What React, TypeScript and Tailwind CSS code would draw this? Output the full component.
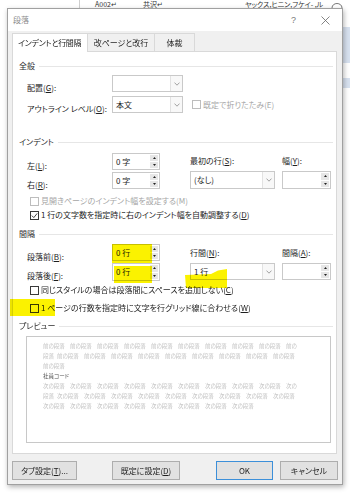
import React from "react";

const U = ({ c }: { c: string }) => (
  <span className="underline underline-offset-[1px]">{c}</span>
);

const Chevron = () => (
  <svg width="6" height="4" viewBox="0 0 6 4">
    <path d="M0.5 0.6 L3 3.2 L5.5 0.6" fill="none" stroke="#8a8a8a" strokeWidth="0.8" />
  </svg>
);

const Select = ({ className, value }: { className: string; value: string }) => (
  <div className={`${className} border border-[#c9c9c9] bg-white flex items-stretch`}>
    <div className="flex-1 flex items-center pl-[3px] text-[8px] leading-none text-[#1e1e1e]">{value}</div>
    <div className="w-[12px] border-l border-[#e2e2e2] bg-[#f8f8f8] flex items-center justify-center">
      <Chevron />
    </div>
  </div>
);

const Spin = ({ className, value }: { className: string; value: string }) => (
  <div className={`${className} border border-[#c9c9c9] bg-white flex items-stretch`}>
    <div className="flex-1 flex items-center pl-[3px] text-[8px] leading-none text-[#1e1e1e]">{value}</div>
    <div className="w-[8px] my-[1px] mr-[1px] flex flex-col gap-[1px]">
      <div className="flex-1 bg-[#e6e6e6] flex items-center justify-center">
        <svg width="3" height="2" viewBox="0 0 3 2"><path d="M0 2 L1.5 0 L3 2Z" fill="#222" /></svg>
      </div>
      <div className="flex-1 bg-[#e6e6e6] flex items-center justify-center">
        <svg width="3" height="2" viewBox="0 0 3 2"><path d="M0 0 L1.5 2 L3 0Z" fill="#222" /></svg>
      </div>
    </div>
  </div>
);

const Box = ({ disabled, checked }: { disabled?: boolean; checked?: boolean }) => (
  <div
    className={
      disabled
        ? "w-[9px] h-[9px] shrink-0 border border-[#bdbdbd] bg-white"
        : "w-[9px] h-[9px] shrink-0 border border-[#3a3a3a] bg-white flex items-center justify-center"
    }
  >
    {checked && (
      <svg width="7" height="7" viewBox="0 0 7 7">
        <path d="M0.8 3.6 L2.8 5.6 L6.2 1.4" fill="none" stroke="#333" strokeWidth="0.9" />
      </svg>
    )}
  </div>
);

const Header = ({ title, className }: { title: string; className: string }) => (
  <div className={`${className} h-[10px] flex items-center pl-[6px] pr-[3px]`}>
    <span className="text-[8px] leading-none text-[#2a2a2a] whitespace-nowrap">{title}</span>
    <div className="flex-1 h-px bg-[#e6e6e6] ml-[4px]" />
  </div>
);

const Lbl = ({ children }: { children: React.ReactNode }) => (
  <span className="text-[8px] leading-none text-[#1e1e1e] whitespace-nowrap">{children}</span>
);

const Groups = ({ word, n }: { word: string; n: number }) => (
  <>
    {Array.from({ length: n }).map((_, i) => (
      <span key={i} className="w-[27px] shrink-0 whitespace-nowrap">
        {word}
      </span>
    ))}
  </>
);

export default function App() {
  return (
    <div className="relative w-[350px] h-[496px] overflow-hidden bg-white text-[#333] font-['Noto_Sans_CJK_JP','Noto_Sans',sans-serif] [font-feature-settings:'palt']">
      {/* desktop behind */}
      <div className="h-[8px] flex items-end overflow-hidden text-[7px] leading-[8px] text-[#333]">
        <div className="w-[80px] h-full shrink-0 border-r border-[#cfcfcf]" />
        <span className="ml-[15px] whitespace-nowrap">A002↵</span>
        <span className="ml-[26px] whitespace-nowrap">共沢↵</span>
        <span className="ml-[82px] whitespace-nowrap">ヤックス,ヒニン,フケイ- ,ル</span>
      </div>
      <div className="absolute right-0 top-[27px] w-[8px] h-[36px] bg-[#d7e1ef]" />
      <div className="absolute right-0 top-[78px] w-[8px] h-[10px] bg-[#d7e1ef]" />
      <svg className="absolute left-[330px] top-0" width="14" height="8" viewBox="0 0 14 8">
        <path d="M2 8 C2 2 12 2 12 8" fill="none" stroke="#555" strokeWidth="0.8" />
      </svg>

      {/* dialog */}
      <div className="relative z-10 ml-[7px] w-[336px] h-[477px] border border-[#a0a0a0] bg-[#f0f0f0] shadow-[1px_2px_5px_rgba(0,0,0,0.3)] flex flex-col">
        {/* title bar */}
        <div className="h-[22px] bg-white flex items-center pl-[5px] pr-[12px]">
          <span className="text-[8px] leading-none text-[#8c8c8c]">段落</span>
          <span className="ml-auto text-[9px] leading-none text-[#7a7a7a] font-['Liberation_Sans',sans-serif]">?</span>
          <svg className="ml-[25px]" width="9" height="9" viewBox="0 0 9 9">
            <path d="M0.5 0.5 L8.5 8.5 M8.5 0.5 L0.5 8.5" stroke="#666" strokeWidth="0.8" />
          </svg>
        </div>

        {/* tabs */}
        <div className="mt-[2px] ml-[4px] h-[18px] flex items-end relative z-10">
          <div className="w-[76px] h-[19px] mb-[-1px] bg-white border border-b-0 border-[#d9d9d9] flex items-center pl-[5px]">
            <span className="text-[8px] leading-none text-[#1e1e1e] whitespace-nowrap tracking-[-0.3px]">インデントと行間隔</span>
          </div>
          <div className="w-[67px] h-[18px] border-t border-r border-[#d9d9d9] flex items-center justify-center">
            <span className="text-[8px] leading-none text-[#1e1e1e] whitespace-nowrap">改ページと改行</span>
          </div>
          <div className="w-[40px] h-[18px] border-t border-r border-[#d9d9d9] flex items-center justify-center">
            <span className="text-[8px] leading-none text-[#1e1e1e] whitespace-nowrap">体裁</span>
          </div>
        </div>

        {/* panel */}
        <div className="relative ml-[4px] w-[325px] h-[403px] bg-white border border-[#d9d9d9] flex flex-col">
          <Header title="全般" className="mt-[9px]" />
          <div className="mt-[4px] h-[17px] flex items-center">
            <div className="w-[99px] pl-[14px]">
              <Lbl>配置(<U c="G" />):</Lbl>
            </div>
            <Select className="w-[71px] h-[17px]" value="" />
          </div>
          <div className="mt-[4px] h-[17px] flex items-center">
            <div className="w-[99px] pl-[14px]">
              <Lbl>アウトライン レベル(<U c="O" />):</Lbl>
            </div>
            <Select className="w-[71px] h-[17px]" value="本文" />
            <div className="ml-[9px] flex items-center gap-[2px]">
              <Box disabled />
              <span className="text-[8px] leading-none text-[#a6a6a6] whitespace-nowrap">既定で折りたたみ(E)</span>
            </div>
          </div>

          <Header title="インデント" className="mt-[24px]" />
          <div className="mt-[6px] flex">
            <div className="w-[177px] flex flex-col">
              <div className="h-[17px] flex items-center">
                <div className="w-[99px] pl-[14px]">
                  <Lbl>左(<U c="L" />):</Lbl>
                </div>
                <Spin className="w-[48px] h-[17px]" value="0 字" />
              </div>
              <div className="mt-[2px] h-[17px] flex items-center">
                <div className="w-[99px] pl-[14px]">
                  <Lbl>右(<U c="R" />):</Lbl>
                </div>
                <Spin className="w-[48px] h-[17px]" value="0 字" />
              </div>
            </div>
            <div className="w-[92px] flex flex-col">
              <div className="mt-[3px] h-[10px] flex items-center">
                <Lbl>最初の行(<U c="S" />):</Lbl>
              </div>
              <Select className="mt-[5px] w-[85px] h-[18px]" value="(なし)" />
            </div>
            <div className="flex flex-col">
              <div className="mt-[3px] h-[10px] flex items-center">
                <Lbl>幅(<U c="Y" />):</Lbl>
              </div>
              <Spin className="mt-[5px] w-[49px] h-[18px]" value="" />
            </div>
          </div>
          <div className="mt-[7px] h-[10px] flex items-center pl-[17px] gap-[2px]">
            <Box disabled />
            <span className="text-[8px] leading-none text-[#a6a6a6] whitespace-nowrap">見開きページのインデント幅を設定する(M)</span>
          </div>
          <div className="mt-[4px] h-[10px] flex items-center pl-[17px] gap-[2px]">
            <Box checked />
            <Lbl>1 行の文字数を指定時に右のインデント幅を自動調整する(<U c="D" />)</Lbl>
          </div>

          <Header title="間隔" className="mt-[9px]" />
          <div className="mt-[5px] flex">
            <div className="w-[177px] flex flex-col">
              <div className="h-[17px] flex items-center">
                <div className="w-[99px] pl-[14px]">
                  <Lbl>段落前(<U c="B" />):</Lbl>
                </div>
                <Spin className="w-[48px] h-[17px]" value="0 行" />
              </div>
              <div className="mt-[2px] h-[18px] flex items-center">
                <div className="w-[99px] pl-[14px]">
                  <Lbl>段落後(<U c="F" />):</Lbl>
                </div>
                <Spin className="w-[48px] h-[18px]" value="0 行" />
              </div>
            </div>
            <div className="w-[92px] flex flex-col">
              <div className="mt-[4px] h-[10px] flex items-center">
                <Lbl>行間(<U c="N" />):</Lbl>
              </div>
              <Select className="mt-[5px] w-[85px] h-[17px]" value="1 行" />
            </div>
            <div className="flex flex-col">
              <div className="mt-[4px] h-[10px] flex items-center">
                <Lbl>間隔(<U c="A" />):</Lbl>
              </div>
              <Spin className="mt-[5px] w-[49px] h-[17px]" value="" />
            </div>
          </div>
          <div className="mt-[4px] h-[10px] flex items-center pl-[17px] gap-[2px]">
            <Box />
            <Lbl>同じスタイルの場合は段落間にスペースを追加しない(<U c="C" />)</Lbl>
          </div>
          <div className="mt-[8px] h-[10px] flex items-center pl-[17px] gap-[2px]">
            <Box />
            <Lbl>1 ページの行数を指定時に文字を行グリッド線に合わせる(<U c="W" />)</Lbl>
          </div>

          <Header title="プレビュー" className="mt-[8px]" />
          <div className="mt-[5px] ml-[13px] w-[305px] h-[107px] border border-[#c8c8c8] bg-white pt-[4px] pl-[16px] text-[5.5px] leading-[10px] text-[#c2c2c2] flex flex-col">
            <div className="h-[10px] flex">
              <Groups word="前の段落" n={9} />
              <span>前の</span>
            </div>
            <div className="h-[10px] flex">
              <span className="w-[14px] shrink-0">段落</span>
              <Groups word="前の段落" n={9} />
            </div>
            <div className="h-[10px] flex">
              <span>前の段落</span>
            </div>
            <div className="h-[10px] flex text-[#555]">
              <span>社員コード</span>
            </div>
            <div className="h-[10px] flex">
              <Groups word="次の段落" n={9} />
              <span>次の</span>
            </div>
            <div className="h-[10px] flex">
              <span className="w-[14px] shrink-0">段落</span>
              <Groups word="次の段落" n={9} />
            </div>
            <div className="h-[10px] flex">
              <Groups word="次の段落" n={8} />
            </div>
          </div>

          {/* highlighter marks */}
          <div className="absolute left-[99px] top-[192px] w-[40px] h-[19px] bg-[#fbf200] mix-blend-multiply" />
          <div className="absolute left-[101px] top-[214px] w-[38px] h-[17px] bg-[#fbf200] mix-blend-multiply" />
          <svg className="absolute left-[172px] top-[217px] mix-blend-multiply" width="42" height="19" viewBox="0 0 42 19">
            <path d="M0 6 L26 5 L33 1.5 L42 0 L42 19 L1 19 Z" fill="#fbf200" />
          </svg>
          <div className="absolute left-[-3px] top-[247px] w-[45px] h-[17px] bg-[#fbf200] mix-blend-multiply" />
        </div>

        {/* buttons */}
        <div className="mt-[7px] ml-[4px] h-[19px] flex">
          <div className="w-[65px] h-[19px] bg-[#e1e1e1] border border-[#adadad] flex items-center justify-center">
            <Lbl>タブ設定(<U c="T" />)...</Lbl>
          </div>
          <div className="ml-[35px] w-[68px] h-[19px] bg-[#e1e1e1] border border-[#adadad] flex items-center justify-center">
            <Lbl>既定に設定(<U c="D" />)</Lbl>
          </div>
          <div className="ml-[36px] w-[57px] h-[19px] bg-[#e1e1e1] border border-[#3c8fd9] flex items-center justify-center">
            <Lbl>OK</Lbl>
          </div>
          <div className="ml-[7px] w-[58px] h-[19px] bg-[#e1e1e1] border border-[#adadad] flex items-center justify-center">
            <Lbl>キャンセル</Lbl>
          </div>
        </div>
      </div>
    </div>
  );
}
